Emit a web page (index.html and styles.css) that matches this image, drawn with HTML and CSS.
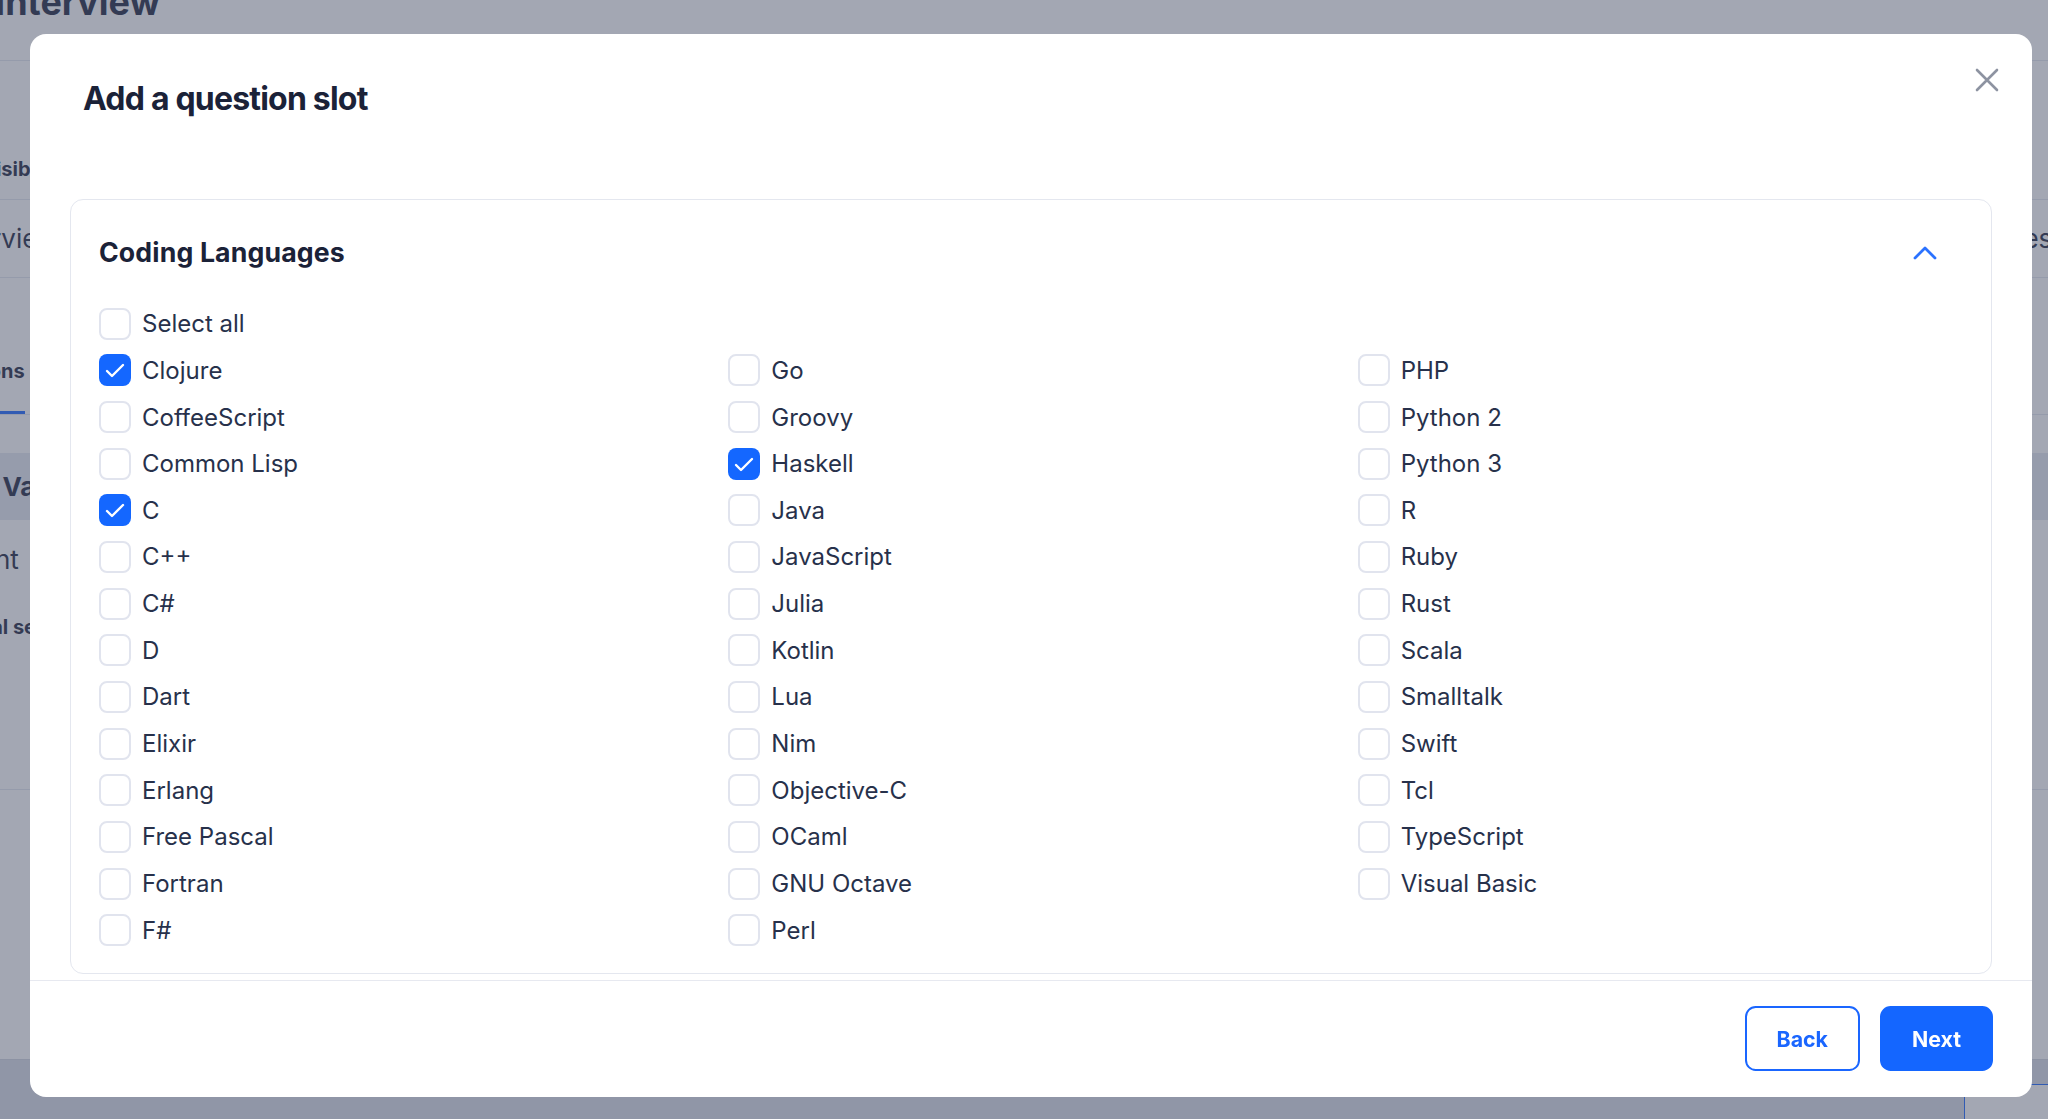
FILE: index.html
```html
<!DOCTYPE html>
<html lang="en">
<head>
    <meta charset="UTF-8">
    <meta name="viewport" content="width=device-width, initial-scale=1.0">
    <title>Technical Interview</title>
    <link rel="stylesheet" href="styles.css">
</head>
<body>
    <!-- interview editor behind the dialog -->
    <div class="page">
        <header class="page-header">
            <div class="page-title">
                <h1>Technical Interview</h1>
            </div>
        </header>
        <div class="page-panel">
            <div class="page-row row-visibility">
                <span class="row-label shift-vis">Visibility</span>
            </div>
            <div class="page-row row-overview">
                <span class="row-text shift-over">Overview</span>
                <span class="row-edge">Notes</span>
            </div>
            <div class="page-tabs">
                <span class="tab active">Questions</span>
            </div>
            <div class="page-list">
                <div class="list-item selected"><span class="shift-java">Java Values</span></div>
                <div class="list-item plain"><span class="shift-assign">Assignment</span></div>
                <div class="list-item small"><span class="shift-manual">Manual setup</span></div>
            </div>
        </div>
        <div class="page-bottom">
            <div class="bottom-card"></div>
        </div>
    </div>

    <div class="overlay">
        <div class="modal">
            <button class="modal-close" aria-label="Close">
                <svg width="24" height="24" viewBox="0 0 24 24">
                    <path d="M2 2 L22 22 M22 2 L2 22" stroke="#8d93a1" stroke-width="2.6" stroke-linecap="round" fill="none"/>
                </svg>
            </button>
            <h2 class="modal-title">Add a question slot</h2>

            <div class="modal-body">
                <section class="lang-card">
                    <div class="lang-head">
                        <h3>Coding Languages</h3>
                        <svg class="chevron" width="24" height="15" viewBox="0 0 24 15">
                            <polyline points="2,13 12,3 22,13" stroke="#2b72ff" stroke-width="2.8" stroke-linecap="round" stroke-linejoin="round" fill="none"/>
                        </svg>
                    </div>
                    <label class="check select-all"><span class="box"></span>Select all</label>
                    <div class="lang-grid" id="langGrid"></div>
                </section>
            </div>

            <div class="modal-footer">
                <button class="btn btn-outline">Back</button>
                <button class="btn btn-primary">Next</button>
            </div>
        </div>
    </div>

    <script>
        const languages = [
            'Clojure', 'CoffeeScript', 'Common Lisp', 'C', 'C++', 'C#', 'D', 'Dart', 'Elixir', 'Erlang',
            'Free Pascal', 'Fortran', 'F#',
            'Go', 'Groovy', 'Haskell', 'Java', 'JavaScript', 'Julia', 'Kotlin', 'Lua', 'Nim',
            'Objective-C', 'OCaml', 'GNU Octave', 'Perl',
            'PHP', 'Python 2', 'Python 3', 'R', 'Ruby', 'Rust', 'Scala', 'Smalltalk', 'Swift', 'Tcl',
            'TypeScript', 'Visual Basic'
        ];
        const selected = ['Clojure', 'C', 'Haskell'];
        const tick = '<svg width="32" height="32" viewBox="0 0 32 32"><polyline points="8,17 13,22 24,11" stroke="#fff" stroke-width="2.4" stroke-linecap="round" stroke-linejoin="round" fill="none"/></svg>';

        const grid = document.getElementById('langGrid');
        languages.forEach((name) => {
            const isOn = selected.includes(name);
            const label = document.createElement('label');
            label.className = 'check';
            label.innerHTML = `<span class="box${isOn ? ' checked' : ''}">${isOn ? tick : ''}</span>${name}`;
            grid.appendChild(label);
        });
    </script>
</body>
</html>
```

FILE: styles.css
```css
* {
    box-sizing: border-box;
}
body {
    margin: 0;
    font-family: Inter, "Noto Sans", sans-serif;
    color: #1e2740;
    background-color: #d9dde6;
    overflow: hidden;
}

/* page behind the dialog */
.page {
    height: 1119px;
    display: flex;
    flex-direction: column;
    overflow: hidden;
}
.page-header {
    height: 61px;
    flex-shrink: 0;
    background-color: white;
    border-bottom: 1px solid #e3e6ee;
}
.page-title {
    width: 160px;
    display: flex;
    justify-content: flex-end;
}
.page-title h1 {
    margin: -20px 0 0;
    font-size: 36px;
    line-height: 44px;
    font-weight: 700;
    white-space: nowrap;
}
.page-panel {
    height: 999px;
    flex-shrink: 0;
    background-color: white;
    border-bottom: 1px solid #d0d4de;
}
.page-row {
    display: flex;
    border-bottom: 1px solid #e3e6ee;
    white-space: nowrap;
}
.row-visibility {
    height: 139px;
    align-items: flex-end;
    padding-bottom: 18px;
}
.row-label {
    font-size: 20px;
    line-height: 24px;
    font-weight: 700;
}
.row-overview {
    height: 78px;
    align-items: center;
}
.row-text {
    font-size: 26px;
    font-weight: 400;
}
.row-edge {
    margin-left: auto;
    width: 68px;
    font-size: 26px;
}
.shift-vis { margin-left: -19px; }
.shift-over { margin-left: -58px; }
.shift-java { margin-left: -64px; }
.shift-assign { margin-left: -126px; }
.shift-manual { margin-left: -64px; }

.page-tabs {
    height: 137px;
    display: flex;
    align-items: flex-end;
    border-bottom: 1px solid #e3e6ee;
}
.tab {
    font-size: 20px;
    line-height: 24px;
    font-weight: 700;
    padding-bottom: 28px;
    margin-left: -75px;
    border-bottom: 3px solid #1a66ff;
}
.page-list {
    height: 375px;
    padding-top: 38px;
    border-bottom: 1px solid #e3e6ee;
}
.list-item {
    display: flex;
    align-items: center;
    white-space: nowrap;
}
.list-item.selected {
    height: 67px;
    background-color: #e4e8f1;
    font-size: 26px;
    font-weight: 700;
}
.list-item.plain {
    height: 78px;
    font-size: 26px;
}
.list-item.small {
    height: 58px;
    font-size: 20px;
    font-weight: 700;
}
.page-bottom {
    flex: 1;
    min-height: 0;
    display: flex;
    justify-content: flex-end;
    padding-top: 24px;
}
.bottom-card {
    width: 94px;
    height: 80px;
    flex-shrink: 0;
    margin-right: -10px;
    background-color: white;
    border: 1.5px solid #1a66ff;
    border-radius: 8px;
}

/* dialog */
.overlay {
    position: fixed;
    inset: 0;
    background-color: rgba(71, 79, 103, 0.5);
    display: flex;
    padding: 34px 16px 22px 30px;
}
.modal {
    position: relative;
    flex: 1;
    background-color: white;
    border-radius: 16px;
    display: flex;
    flex-direction: column;
}
.modal-close {
    position: absolute;
    top: 34px;
    right: 33px;
    padding: 0;
    border: none;
    background: none;
    cursor: pointer;
    line-height: 0;
}
.modal-title {
    margin: 0;
    padding: 45px 53px 0;
    font-size: 32px;
    line-height: 40px;
    font-weight: 700;
    letter-spacing: -0.8px;
    color: #1b2238;
}
.modal-body {
    flex: 1;
    min-height: 0;
    overflow: hidden;
    padding: 80px 40px 0;
}
.lang-card {
    border: 1.33px solid #e4e7ef;
    border-radius: 13px;
    padding: 34px 28px 27px;
}
.lang-head {
    display: flex;
    align-items: center;
    justify-content: space-between;
    margin-bottom: 37.7px;
}
.lang-head h3 {
    margin: 0;
    font-size: 26.67px;
    line-height: 36px;
    font-weight: 700;
    letter-spacing: 0.15px;
    color: #1b2238;
}
.chevron {
    margin-right: 26px;
}
.check {
    display: flex;
    align-items: center;
    gap: 11px;
    height: 32px;
    font-size: 24px;
    color: #27314b;
    white-space: nowrap;
    cursor: pointer;
}
.box {
    width: 32px;
    height: 32px;
    flex-shrink: 0;
    border: 2px solid #e1e4ee;
    border-radius: 8px;
    background-color: white;
    line-height: 0;
}
.box.checked {
    border: none;
    background-color: #1467ff;
}
.lang-grid {
    display: grid;
    grid-template-columns: repeat(3, 1fr);
    grid-template-rows: repeat(13, 32px);
    grid-auto-flow: column;
    column-gap: 24px;
    row-gap: 14.67px;
    margin-top: 14.67px;
}
.modal-footer {
    border-top: 1.33px solid #e7e9f0;
    margin-top: 5px;
    padding: 24.7px 39px 26px;
    display: flex;
    justify-content: flex-end;
    gap: 20px;
}
.btn {
    height: 65px;
    padding: 0 30px;
    border: 2px solid #1a66ff;
    border-radius: 10.67px;
    font-family: Inter, "Noto Sans", sans-serif;
    font-size: 21.33px;
    font-weight: 700;
    cursor: pointer;
}
.btn-outline {
    background-color: white;
    color: #1a66ff;
}
.btn-primary {
    background-color: #1466ff;
    border-color: #1466ff;
    color: white;
}
```
